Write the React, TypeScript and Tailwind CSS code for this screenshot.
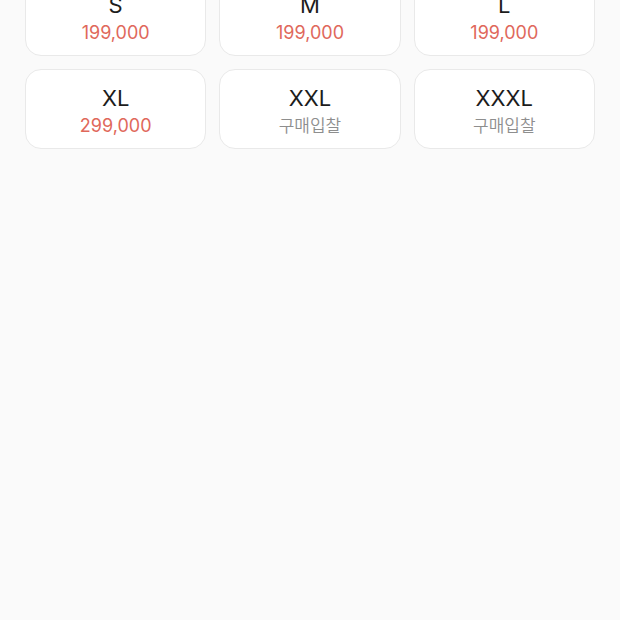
import React from 'react';

interface SizeOption {
  label: string;
  price: number | null;
}

const SIZES: SizeOption[] = [
  { label: 'S', price: 199000 },
  { label: 'M', price: 199000 },
  { label: 'L', price: 199000 },
  { label: 'XL', price: 299000 },
  { label: 'XXL', price: null },
  { label: 'XXXL', price: null },
];

interface SizeButtonProps {
  option: SizeOption;
}

const SizeButton: React.FC<SizeButtonProps> = ({ option }) => {
  return (
    <button
      type="button"
      className="flex h-20 flex-col items-center justify-center rounded-2xl border border-[#e9e9e9] bg-white pt-1.5"
    >
      <span className="text-[22px] leading-7 text-[#1c1c1c]">{option.label}</span>
      {option.price !== null ? (
        <span className="text-[18px] leading-7 text-[#e0685b]">{option.price.toLocaleString('en-US')}</span>
      ) : (
        <span className="text-[17px] leading-7 font-[350] text-[#8e8e8e]">구매입찰</span>
      )}
    </button>
  );
};

const App: React.FC = () => {
  return (
    <div className="h-screen overflow-hidden bg-[#fafafa] font-['Inter','Noto_Sans_CJK_KR',sans-serif]">
      {/* The list is scrolled, so the first row starts above the top edge */}
      <div className="-mt-6 grid grid-cols-3 gap-[13px] px-[25px]">
        {SIZES.map((option) => (
          <SizeButton key={option.label} option={option} />
        ))}
      </div>
    </div>
  );
};

export default App;
